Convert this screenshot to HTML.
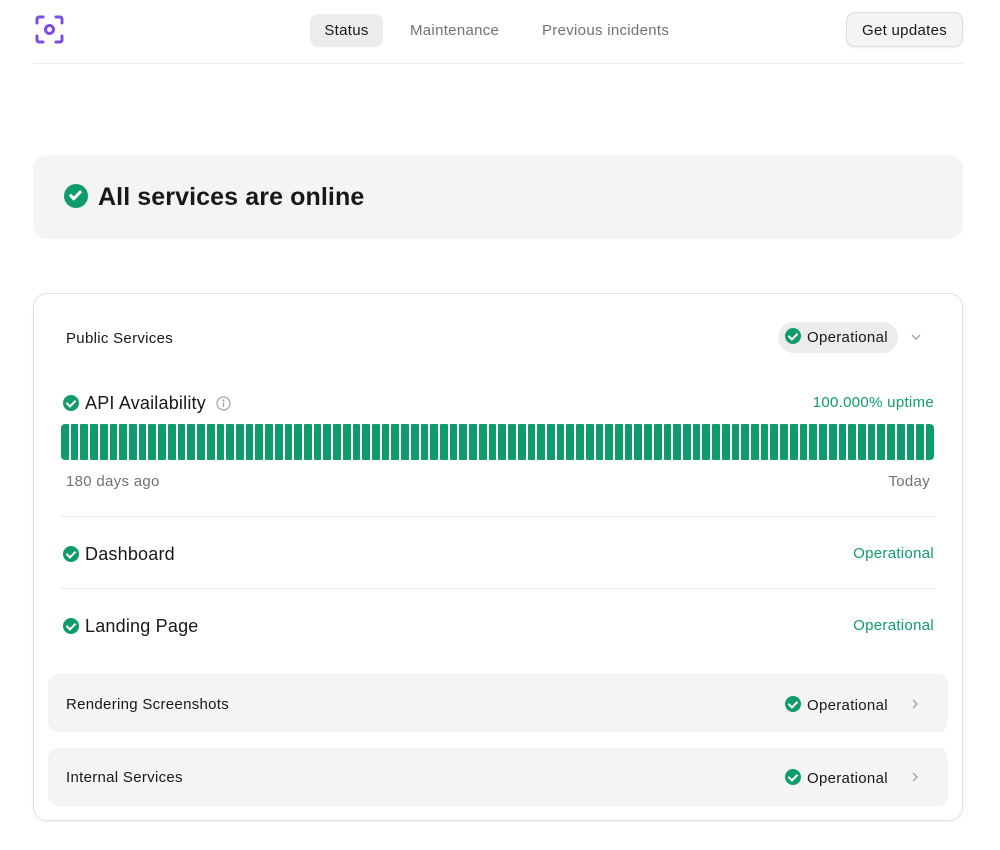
<!DOCTYPE html>
<html><head><meta charset="utf-8"><style>
*{box-sizing:border-box;margin:0;padding:0}
body{width:1000px;height:850px;background:#fff;font-family:"Liberation Sans",sans-serif;color:#18181b;position:relative;overflow:hidden}
.abs{position:absolute}
.nav a{position:absolute;top:13px;height:33px;line-height:33px;font-size:15px;color:#71717a;padding:0 14px;border-radius:8px;letter-spacing:.3px}
.chk{display:inline-block;width:16px;height:16px;border-radius:50%;background:#0f9b6c;position:relative;vertical-align:-2px;margin-right:6px}
.chk:after{content:"";position:absolute;left:5px;top:3px;width:4px;height:7px;border:solid #fff;border-width:0 2px 2px 0;transform:rotate(45deg)}
.row{position:absolute;left:48px;width:900px;height:58px;background:#f4f4f5;border-radius:10px}
.green{color:#0f9b6c}
.t15{font-size:15px;letter-spacing:.3px}
.t18{font-size:18px;letter-spacing:.2px;line-height:20px}
</style></head><body>
<svg class="abs" style="left:35px;top:15px" width="29" height="29" viewBox="0 0 29 29" fill="none" stroke="#7c4ddf" stroke-width="3" stroke-linecap="round">
<path d="M2 8V4a2 2 0 0 1 2-2h4M21 2h4a2 2 0 0 1 2 2v4M27 21v4a2 2 0 0 1-2 2h-4M8 27H4a2 2 0 0 1-2-2v-4"/><circle cx="14.5" cy="14.5" r="4"/></svg>
<div class="nav">
<a style="left:310px;width:73px;text-align:center;padding:0;background:#ececef;color:#18181b;top:14px">Status</a>
<a style="left:396px;top:14px">Maintenance</a>
<a style="left:528px;top:14px">Previous incidents</a>
</div>
<div class="abs" style="left:846px;top:12px;width:117px;height:35px;border:1px solid #dcdce0;border-radius:9px;background:#f4f4f5;font-size:15px;letter-spacing:.3px;line-height:35px;text-align:center;box-shadow:0 1px 2px rgba(0,0,0,.06)">Get updates</div>
<div class="abs" style="left:33px;top:63px;width:930px;height:1px;background:#ececef"></div>
<div class="abs" style="left:33px;top:155px;width:930px;height:84px;background:#f4f4f5;border-radius:14px"></div>
<div class="abs" style="left:64px;top:184px;width:24px;height:24px;border-radius:50%;background:#0f9b6c"></div>
<div class="abs" style="left:72px;top:188px;width:7px;height:12px;border:solid #fff;border-width:0 3px 3px 0;transform:rotate(45deg)"></div>
<div class="abs" style="left:98px;top:182px;font-size:25px;font-weight:bold;line-height:30px;letter-spacing:.1px">All services are online</div>
<div class="abs" style="left:33px;top:293px;width:930px;height:528px;border:1px solid #e0e0e4;border-radius:14px;box-shadow:0 1px 3px rgba(0,0,0,.05)"></div>
<div class="abs t15" style="left:66px;top:329px;line-height:20px">Public Services</div>
<div class="abs t15" style="left:778px;top:322px;width:120px;height:31px;background:#ececef;border-radius:16px;line-height:32px;padding-left:7px;white-space:nowrap"><span class="chk"></span>Operational</div>
<svg class="abs" style="left:910px;top:333px" width="12" height="8" viewBox="0 0 12 8" fill="none" stroke="#a1a1aa" stroke-width="1.3"><path d="M2 2l4 4 4-4"/></svg>
<div class="abs t18" style="left:63px;top:393px"><span class="chk"></span>API Availability</div>
<svg class="abs" style="left:216px;top:396px" width="15" height="15" viewBox="0 0 15 15" fill="none" stroke="#a1a1aa" stroke-width="1.2"><circle cx="7.5" cy="7.5" r="6.5"/><path d="M7.5 6.5v4.5"/><circle cx="7.5" cy="4.3" r=".5" fill="#a1a1aa"/></svg>
<div class="abs green t15" style="left:700px;top:394px;width:234px;text-align:right">100.000% uptime</div>
<div class="abs" id="bars" style="left:61px;top:424px;width:873px;height:36px;display:flex;gap:2px"></div>
<div class="abs t15" style="left:66px;top:473px;color:#71717a">180 days ago</div>
<div class="abs t15" style="left:850px;top:473px;width:80px;text-align:right;color:#71717a">Today</div>
<div class="abs" style="left:61px;top:516px;width:873px;height:1px;background:#ececef"></div>
<div class="abs t18" style="left:63px;top:544px"><span class="chk"></span>Dashboard</div>
<div class="abs green t15" style="left:760px;top:545px;width:174px;text-align:right">Operational</div>
<div class="abs" style="left:61px;top:588px;width:873px;height:1px;background:#ececef"></div>
<div class="abs t18" style="left:63px;top:616px"><span class="chk"></span>Landing Page</div>
<div class="abs green t15" style="left:760px;top:617px;width:174px;text-align:right">Operational</div>
<div class="row" style="top:674px"></div>
<div class="abs t15" style="left:66px;top:696px">Rendering Screenshots</div>
<div class="abs t15" style="left:785px;top:696px;white-space:nowrap"><span class="chk"></span>Operational</div>
<svg class="abs" style="left:911px;top:698px" width="8" height="12" viewBox="0 0 8 12" fill="none" stroke="#a1a1aa" stroke-width="1.3"><path d="M2 2l4 4-4 4"/></svg>
<div class="row" style="top:748px"></div>
<div class="abs t15" style="left:66px;top:769px">Internal Services</div>
<div class="abs t15" style="left:785px;top:769px;white-space:nowrap"><span class="chk"></span>Operational</div>
<svg class="abs" style="left:911px;top:771px" width="8" height="12" viewBox="0 0 8 12" fill="none" stroke="#a1a1aa" stroke-width="1.3"><path d="M2 2l4 4-4 4"/></svg>
<script>
var b=document.getElementById('bars'),h='';
for(var i=0;i<90;i++){h+='<div style="flex:1;background:#0f9b6c;border-radius:'+(i==0?'4px 1px 1px 4px':i==89?'1px 4px 4px 1px':'1px')+'"></div>';}
b.innerHTML=h;
</script>
</body></html>
